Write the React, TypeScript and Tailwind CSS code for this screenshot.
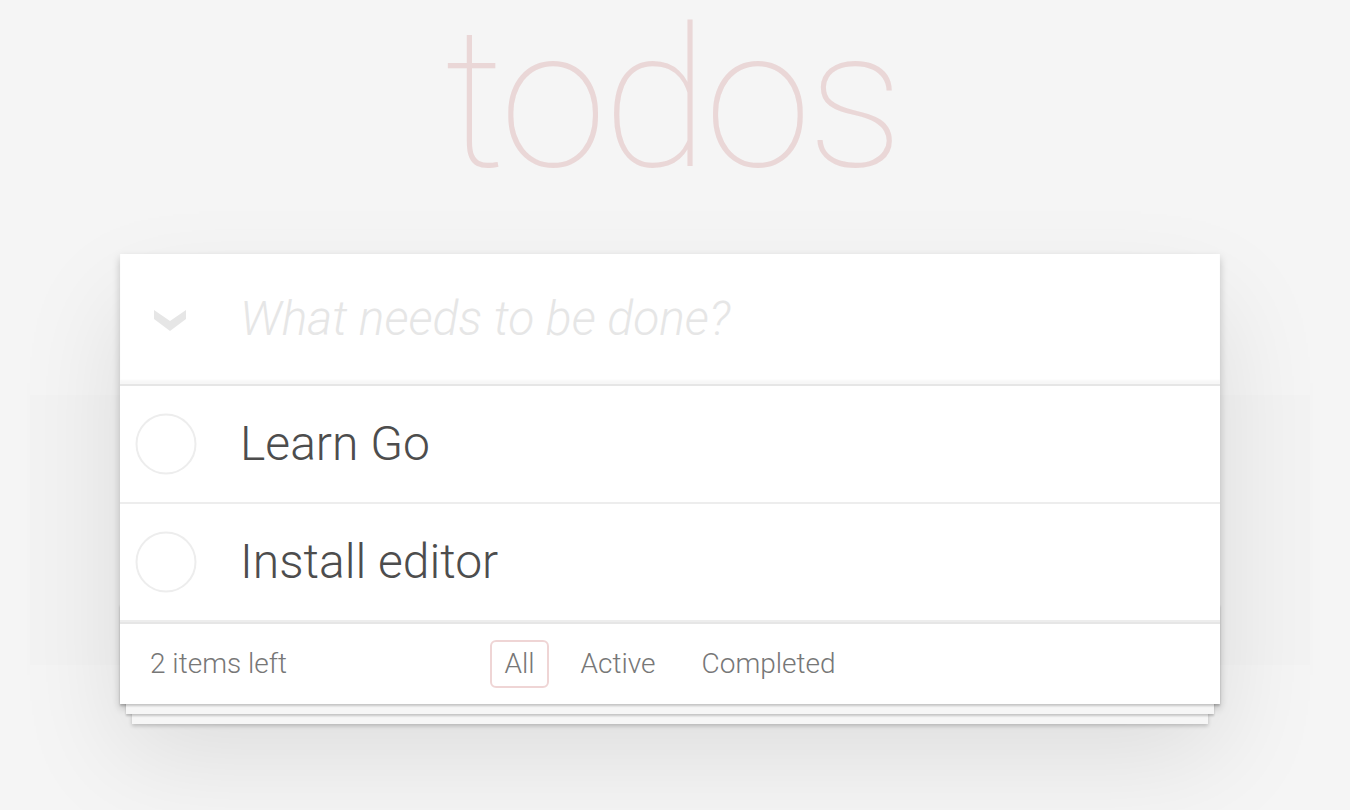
import React, { useState } from 'react';

type Filter = 'all' | 'active' | 'completed';

interface Todo {
  id: number;
  title: string;
  done: boolean;
}

const initialTodos: Todo[] = [
  { id: 1, title: 'Learn Go', done: false },
  { id: 2, title: 'Install editor', done: false },
];

const ToggleCircle = () => (
  <svg width="62" height="62" viewBox="0 0 62 62">
    <circle cx="31" cy="31" r="29.5" fill="none" stroke="#ededed" strokeWidth="2" />
  </svg>
);

export default function App() {
  const [todos] = useState<Todo[]>(initialTodos);
  const [filter, setFilter] = useState<Filter>('all');
  const left = todos.filter((t) => !t.done).length;

  const filters: { key: Filter; label: string }[] = [
    { key: 'all', label: 'All' },
    { key: 'active', label: 'Active' },
    { key: 'completed', label: 'Completed' },
  ];

  return (
    <div className="relative min-h-screen bg-[#f5f5f5] font-['Roboto','Helvetica_Neue','Liberation_Sans',sans-serif] font-light text-[#4d4d4d] overflow-hidden">
      {/* faint ghost block behind the list */}
      <div className="absolute left-[30px] top-[395px] w-[1280px] h-[270px] bg-[#f3f3f3]" />

      <div className="relative ml-[120px] w-[1100px]">
        <h1 className="h-[200px] pl-[4px] text-center text-[194px] leading-[200px] tracking-[-4px] font-thin text-[rgba(175,47,47,0.15)]">
          todos
        </h1>

        <section className="relative mt-[54px] bg-white shadow-[0_4px_8px_0_rgba(0,0,0,0.2),0_50px_100px_0_rgba(0,0,0,0.1)]">
          {/* new todo */}
          <header className="flex h-[130px] items-center shadow-[inset_0_-4px_2px_rgba(0,0,0,0.03)]">
            <div className="flex w-[120px] shrink-0 pl-[34px] pt-[2px]">
              <svg width="32" height="21" viewBox="0 0 32 21">
                <polygon points="0,0 16,11 32,0 32,9 16,21 0,9" fill="#e6e6e6" />
              </svg>
            </div>
            <input
              className="flex-1 bg-transparent pr-[32px] text-[48px] font-light leading-[1.4] text-[#4d4d4d] outline-none placeholder:italic placeholder:font-light placeholder:text-[#e6e6e6]"
              placeholder="What needs to be done?"
            />
          </header>

          {/* list */}
          <ul className="border-t-2 border-[#e6e6e6]">
            {todos.map((t) => (
              <li key={t.id} className="flex h-[118px] items-center border-b-2 border-[#ededed]">
                <div className="flex w-[120px] shrink-0 pl-[15px]">
                  <ToggleCircle />
                </div>
                <label className="text-[48px] leading-[1.2] text-[#4d4d4d]">{t.title}</label>
              </li>
            ))}
          </ul>

          {/* footer */}
          <footer className="relative grid h-[82px] grid-cols-[1fr_auto_1fr] items-center border-t-2 border-[#e6e6e6] px-[30px] text-[28px] text-[#777]">
            <div className="pointer-events-none absolute inset-x-0 bottom-0 h-[100px] shadow-[0_2px_2px_rgba(0,0,0,0.2),0_16px_0_-6px_#f6f6f6,0_18px_2px_-6px_rgba(0,0,0,0.2),0_32px_0_-12px_#f6f6f6,0_34px_4px_-12px_rgba(0,0,0,0.2)]" />
            <span className="relative">{left} items left</span>
            <ul className="relative flex gap-[6px]">
              {filters.map((f) => (
                <li key={f.key}>
                  <button
                    onClick={() => setFilter(f.key)}
                    className={`m-[6px] rounded-[6px] border-2 px-[12px] py-[6px] leading-[32px] text-[#777] ${
                      filter === f.key ? 'border-[rgba(175,47,47,0.2)]' : 'border-transparent'
                    }`}
                  >
                    {f.label}
                  </button>
                </li>
              ))}
            </ul>
            <span />
          </footer>
        </section>
      </div>
    </div>
  );
}
